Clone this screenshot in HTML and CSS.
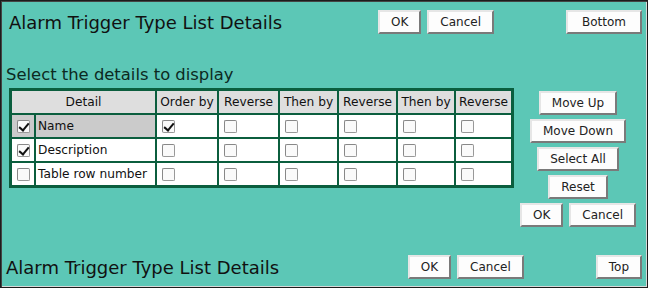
FILE: index.html
```html
<!DOCTYPE html>
<html lang="en">
<head>
  <meta charset="UTF-8">
  <title>Alarm Trigger Type List Details</title>
  <link rel="stylesheet" href="styles.css">
</head>
<body>
  <div class="page">
    <div class="bar bar-top">
      <h1 class="bar-title">Alarm Trigger Type List Details</h1>
      <div class="actions">
        <button class="btn">OK</button>
        <button class="btn">Cancel</button>
      </div>
      <button class="btn">Bottom</button>
    </div>

    <h2 class="subhead">Select the details to display</h2>

    <div class="editor">
      <table class="details">
        <tr class="head">
          <td colspan="2" class="c-detail-head">Detail</td>
          <td class="c-order">Order by</td>
          <td class="c-rev1">Reverse</td>
          <td class="c-then1">Then by</td>
          <td class="c-rev2">Reverse</td>
          <td class="c-then2">Then by</td>
          <td class="c-rev3">Reverse</td>
        </tr>
        <tr class="selected">
          <td class="c-cb sel"><span class="cb checked"></span></td>
          <td class="c-name sel">Name</td>
          <td><span class="cb checked"></span></td>
          <td><span class="cb"></span></td>
          <td><span class="cb"></span></td>
          <td><span class="cb"></span></td>
          <td><span class="cb"></span></td>
          <td><span class="cb"></span></td>
        </tr>
        <tr>
          <td class="c-cb"><span class="cb checked"></span></td>
          <td class="c-name">Description</td>
          <td><span class="cb"></span></td>
          <td><span class="cb"></span></td>
          <td><span class="cb"></span></td>
          <td><span class="cb"></span></td>
          <td><span class="cb"></span></td>
          <td><span class="cb"></span></td>
        </tr>
        <tr>
          <td class="c-cb"><span class="cb"></span></td>
          <td class="c-name">Table row number</td>
          <td><span class="cb"></span></td>
          <td><span class="cb"></span></td>
          <td><span class="cb"></span></td>
          <td><span class="cb"></span></td>
          <td><span class="cb"></span></td>
          <td><span class="cb"></span></td>
        </tr>
      </table>

      <div class="side">
        <button class="btn">Move Up</button>
        <button class="btn">Move Down</button>
        <button class="btn">Select All</button>
        <button class="btn">Reset</button>
        <div class="actions">
          <button class="btn">OK</button>
          <button class="btn">Cancel</button>
        </div>
      </div>
    </div>

    <div class="bar bar-bottom">
      <h1 class="bar-title">Alarm Trigger Type List Details</h1>
      <div class="actions">
        <button class="btn">OK</button>
        <button class="btn">Cancel</button>
      </div>
      <button class="btn">Top</button>
    </div>
  </div>
</body>
</html>
```

FILE: styles.css
```css
html, body {
  margin: 0;
  padding: 0;
  height: 100%;
  overflow: hidden;
  font-family: "DejaVu Sans", Verdana, sans-serif;
}
.page {
  box-sizing: border-box;
  height: 288px;
  background-color: #5cc7b6;
  border: 1px solid #1c1c1c;
  box-shadow: inset 1px 1px 0 #444, inset -1px -1px 0 #d8d8d8;
  display: flex;
  flex-direction: column;
}

/* title bars */
.bar {
  display: flex;
  align-items: center;
  padding: 0 5px 0 8px;
}
.bar-top {
  margin-top: 9px;
}
.bar-bottom {
  margin-top: auto;
  margin-bottom: 8px;
  padding-left: 5px;
}
.bar-title {
  flex: 1;
  margin: 0;
  font-size: 18px;
  font-weight: normal;
  color: #111;
}
.actions {
  display: flex;
  gap: 6px;
}
.bar-top .actions { margin-right: 72px; }
.bar-bottom .actions { margin-right: 72px; }

.btn {
  font-family: "DejaVu Sans", Verdana, sans-serif;
  font-size: 12px;
  line-height: 14px;
  color: #222;
  background-color: #fdfdfd;
  padding: 3px 11px;
  border: 2px solid;
  border-color: #e6e6e6 #7a7a7a #7a7a7a #e6e6e6;
  border-radius: 0;
  cursor: pointer;
}
.bar-top > .btn { padding: 3px 14px; }

.subhead {
  margin: 31px 0 0 5px;
  font-size: 16.4px;
  font-weight: normal;
  line-height: 19px;
  color: #0c2a22;
}

/* details table + side buttons */
.editor {
  display: flex;
  align-items: flex-start;
  margin-top: 4px;
}
.details {
  margin-left: 8px;
  border: 3px solid #0b5e3e;
  border-spacing: 0;
  background-color: #fff;
  font-size: 12.2px;
  color: #111;
}
.details td {
  box-sizing: border-box;
  height: 24px;
  padding: 0 0 0 1px;
  border-left: 2px solid #0b5e3e;
  border-top: 2px solid #0b5e3e;
  white-space: nowrap;
  vertical-align: middle;
}
.details td:first-child { border-left: none; }
.details tr:first-child td { border-top: none; height: 22px; }

.head td {
  background-color: #dedede;
  text-align: center;
  padding: 0;
}
.c-detail-head { width: 143px; }
.c-order { width: 62px; }
.c-rev1 { width: 61px; }
.c-then1 { width: 59px; }
.c-rev2 { width: 59px; }
.c-then2 { width: 58px; }
.c-rev3 { width: 57px; }
.details td.c-cb { width: 22px; padding-left: 0; text-align: center; }
.details td.c-name { width: 121px; padding-left: 2px; }
.details td.sel { background-color: #cbcbcb; }

.cb {
  display: inline-block;
  box-sizing: border-box;
  width: 13px;
  height: 13px;
  margin-left: 4px;
  vertical-align: middle;
  border: 1px solid #999;
  border-top-color: #888;
  border-left-color: #888;
  border-radius: 2px;
  background-color: #fafafa;
  position: relative;
}
.c-cb .cb { margin-left: 0; }
.cb.checked::after {
  content: "";
  position: absolute;
  left: 3px;
  top: 0px;
  width: 4px;
  height: 8px;
  border: solid #111;
  border-width: 0 2px 2px 0;
  transform: rotate(40deg);
}

.side {
  width: 116px;
  margin-left: 6px;
  padding-top: 3px;
  display: flex;
  flex-direction: column;
  align-items: center;
  gap: 4px;
}
```
